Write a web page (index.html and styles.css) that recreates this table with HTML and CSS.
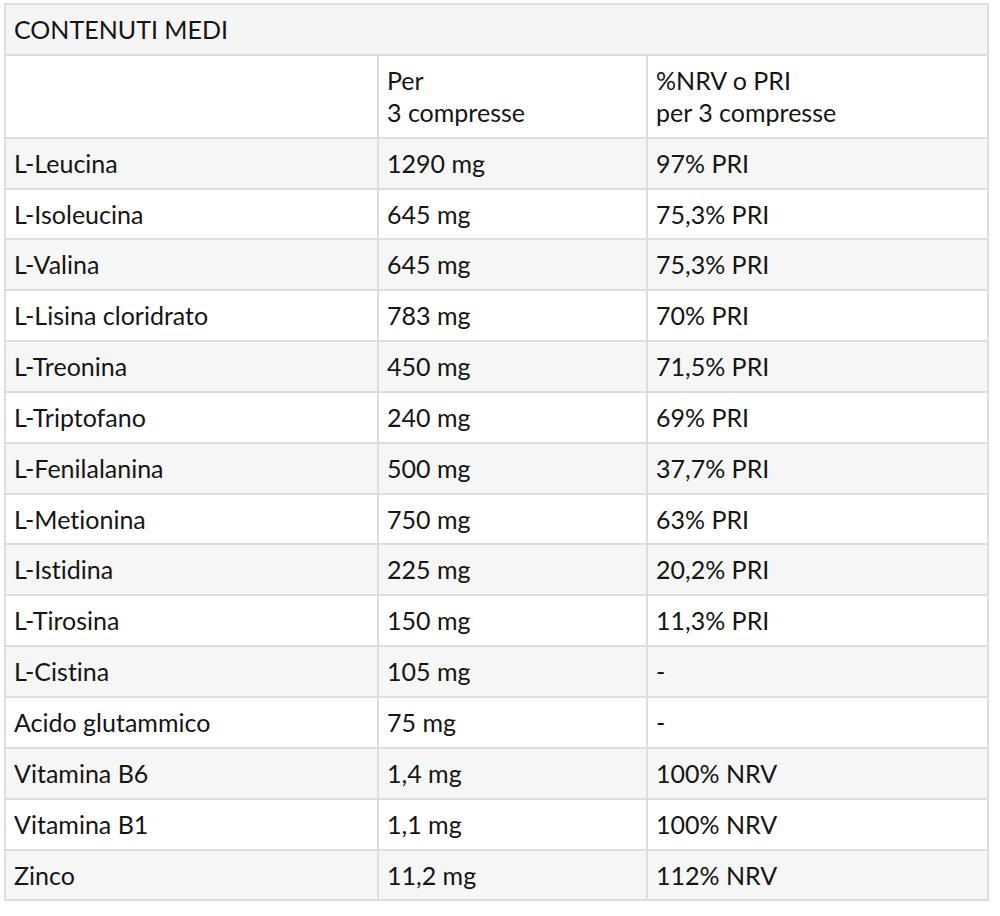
FILE: index.html
```html
<!DOCTYPE html>
<html lang="it">
<head>
<meta charset="utf-8">
<link rel="stylesheet" href="styles.css">
</head>
<body>
<table class="nutri">
  <colgroup>
    <col class="c1"><col class="c2"><col class="c3">
  </colgroup>
  <thead>
    <tr class="title"><th colspan="3">CONTENUTI MEDI</th></tr>
  </thead>
  <tbody>
    <tr><td></td><td>Per<br>3 compresse</td><td>%NRV o PRI<br>per 3 compresse</td></tr>
    <tr><td>L-Leucina</td><td>1290 mg</td><td>97% PRI</td></tr>
    <tr><td>L-Isoleucina</td><td>645 mg</td><td>75,3% PRI</td></tr>
    <tr><td>L-Valina</td><td>645 mg</td><td>75,3% PRI</td></tr>
    <tr><td>L-Lisina cloridrato</td><td>783 mg</td><td>70% PRI</td></tr>
    <tr><td>L-Treonina</td><td>450 mg</td><td>71,5% PRI</td></tr>
    <tr><td>L-Triptofano</td><td>240 mg</td><td>69% PRI</td></tr>
    <tr><td>L-Fenilalanina</td><td>500 mg</td><td>37,7% PRI</td></tr>
    <tr><td>L-Metionina</td><td>750 mg</td><td>63% PRI</td></tr>
    <tr><td>L-Istidina</td><td>225 mg</td><td>20,2% PRI</td></tr>
    <tr><td>L-Tirosina</td><td>150 mg</td><td>11,3% PRI</td></tr>
    <tr><td>L-Cistina</td><td>105 mg</td><td>-</td></tr>
    <tr><td>Acido glutammico</td><td>75 mg</td><td>-</td></tr>
    <tr><td>Vitamina B6</td><td>1,4 mg</td><td>100% NRV</td></tr>
    <tr><td>Vitamina B1</td><td>1,1 mg</td><td>100% NRV</td></tr>
    <tr><td>Zinco</td><td>11,2 mg</td><td>112% NRV</td></tr>
  </tbody>
</table>
</body>
</html>
```

FILE: styles.css
```css
html, body {
  margin: 0;
  background: #ffffff;
}
body {
  padding: 3px 0 0 4px;
  font-family: Lato, "Open Sans", sans-serif;
  color: #151515;
  font-variant-ligatures: none;
}
.nutri {
  border-collapse: collapse;
  width: 983px;
  table-layout: fixed;
  font-size: 25px;
  line-height: 32px;
}
.c1 { width: 373px; }
.c2 { width: 269px; }
.c3 { width: 341px; }
.nutri th,
.nutri td {
  border: 2px solid #dedede;
  padding: 8px 9px 8.85px 8px;
  text-align: left;
  vertical-align: top;
  font-weight: normal;
}
.nutri .title th {
  background: #f5f5f5;
}
.nutri tbody tr:nth-child(even) td {
  background: #f6f6f6;
}
```
